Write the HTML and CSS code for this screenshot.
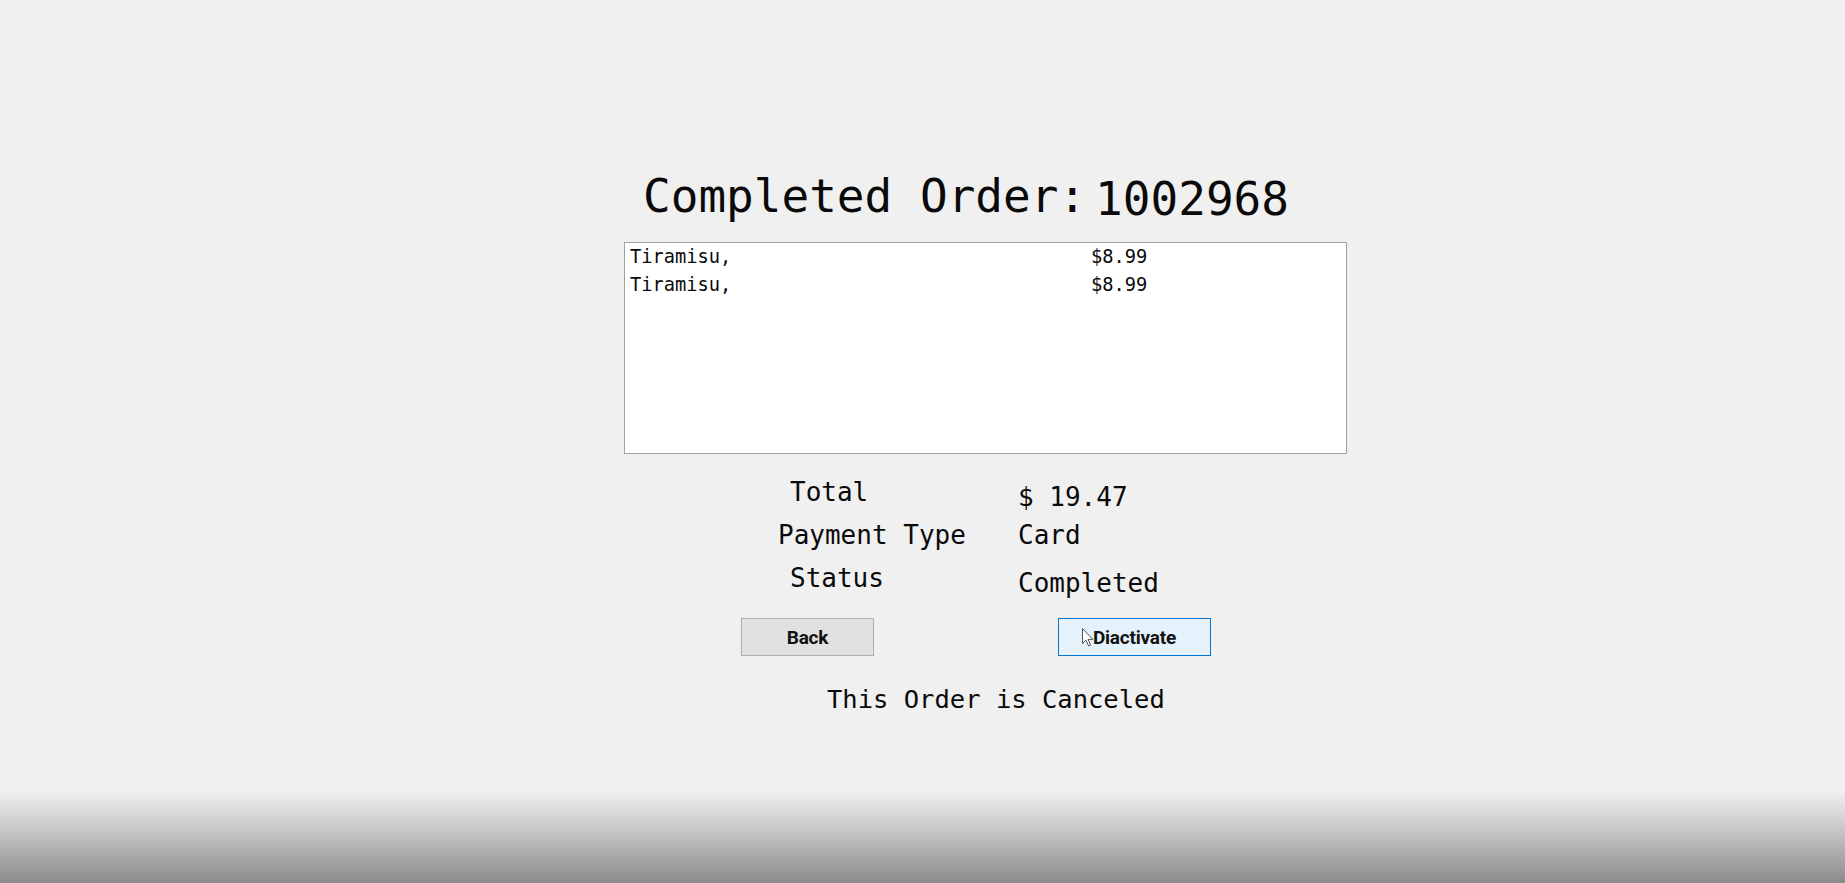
FILE: index.html
```html
<!DOCTYPE html>
<html>
<head>
<meta charset="utf-8">
<title>Completed Order</title>
<link rel="stylesheet" href="styles.css">
</head>
<body>
<div class="page">
  <main class="main">
    <div class="form">
      <h1 class="title"><span class="title-label">Completed Order:</span><span class="title-num">1002968</span></h1>
      <div class="list">
        <div class="item"><span class="item-name">Tiramisu,</span><span class="item-price">$8.99</span></div>
        <div class="item"><span class="item-name">Tiramisu,</span><span class="item-price">$8.99</span></div>
      </div>
      <div class="summary">
        <div class="row"><span class="lbl lbl-in">Total</span><span class="val val-low">$ 19.47</span></div>
        <div class="row"><span class="lbl">Payment Type</span><span class="val">Card</span></div>
        <div class="row"><span class="lbl lbl-in">Status</span><span class="val val-low">Completed</span></div>
      </div>
      <div class="buttons">
        <button class="btn btn-back">Back</button>
        <button class="btn btn-active">Diactivate<svg class="cursor" width="12" height="19" viewBox="0 0 12 19"><path d="M0.5 0.5 L0.5 15.5 L4 12.2 L6.6 18 L8.6 17.1 L6.1 11.4 L10.8 11.4 Z" fill="#fff" stroke="#555" stroke-width="1" stroke-linejoin="round"/></svg></button>
      </div>
      <p class="note">This Order is Canceled</p>
    </div>
  </main>
  <div class="shade"></div>
</div>
</body>
</html>
```
FILE: styles.css
```css
html, body {
  margin: 0;
  padding: 0;
  background: #f0f0f0;
}

.page {
  width: 1845px;
  height: 883px;
  display: flex;
  flex-direction: column;
  overflow: hidden;
  font-family: "DejaVu Sans Mono", "Liberation Mono", monospace;
  color: #0a0a0a;
}

.main {
  flex: 1;
}

.form {
  margin-left: 624px;
  width: 723px;
  padding-top: 169px;
}

.title {
  margin: 0 0 0 19px;
  height: 54px;
  line-height: 54px;
  font-weight: normal;
  font-size: 46px;
  white-space: nowrap;
}

.title-num {
  font-size: 46px;
  line-height: 1;
  margin-left: 9px;
  position: relative;
  top: 3px;
}

.list {
  box-sizing: border-box;
  margin-top: 19px;
  width: 723px;
  height: 212px;
  background: #ffffff;
  border: 1px solid #a0a0a0;
  padding: 0 0 0 5px;
  font-size: 18.7px;
}

.item {
  display: flex;
  height: 28px;
  line-height: 28px;
  white-space: nowrap;
}

.item-name {
  width: 461px;
}

.summary {
  margin-top: 23px;
  font-size: 26px;
}

.row {
  display: flex;
  height: 43px;
  line-height: 30px;
  white-space: nowrap;
}

.lbl {
  box-sizing: border-box;
  width: 394px;
  padding-left: 154px;
}

.lbl-in {
  padding-left: 166px;
}

.val-low {
  margin-top: 5px;
}

.buttons {
  display: flex;
  margin-top: 12px;
  padding-left: 117px;
  gap: 184px;
}

.btn {
  box-sizing: border-box;
  height: 38px;
  padding: 0;
  font-family: Roboto, "Liberation Sans", sans-serif;
  font-weight: 700;
  font-size: 19px;
  letter-spacing: -0.2px;
  color: #111;
  border: 1px solid #adadad;
  background: #e1e1e1;
}

.btn-back {
  width: 133px;
}

.btn-active {
  width: 153px;
  position: relative;
  background: #e5f1fb;
  border-color: #0078d7;
}

.cursor {
  position: absolute;
  left: 23px;
  top: 9px;
}

.note {
  margin: 28px 0 0 203px;
  font-size: 25.5px;
  line-height: 30px;
  white-space: nowrap;
}

.shade {
  height: 93px;
  background: linear-gradient(to bottom, #f0f0f0 0%, #d4d4d4 30%, #aaaaaa 70%, #8b8b8b 100%);
}
```
